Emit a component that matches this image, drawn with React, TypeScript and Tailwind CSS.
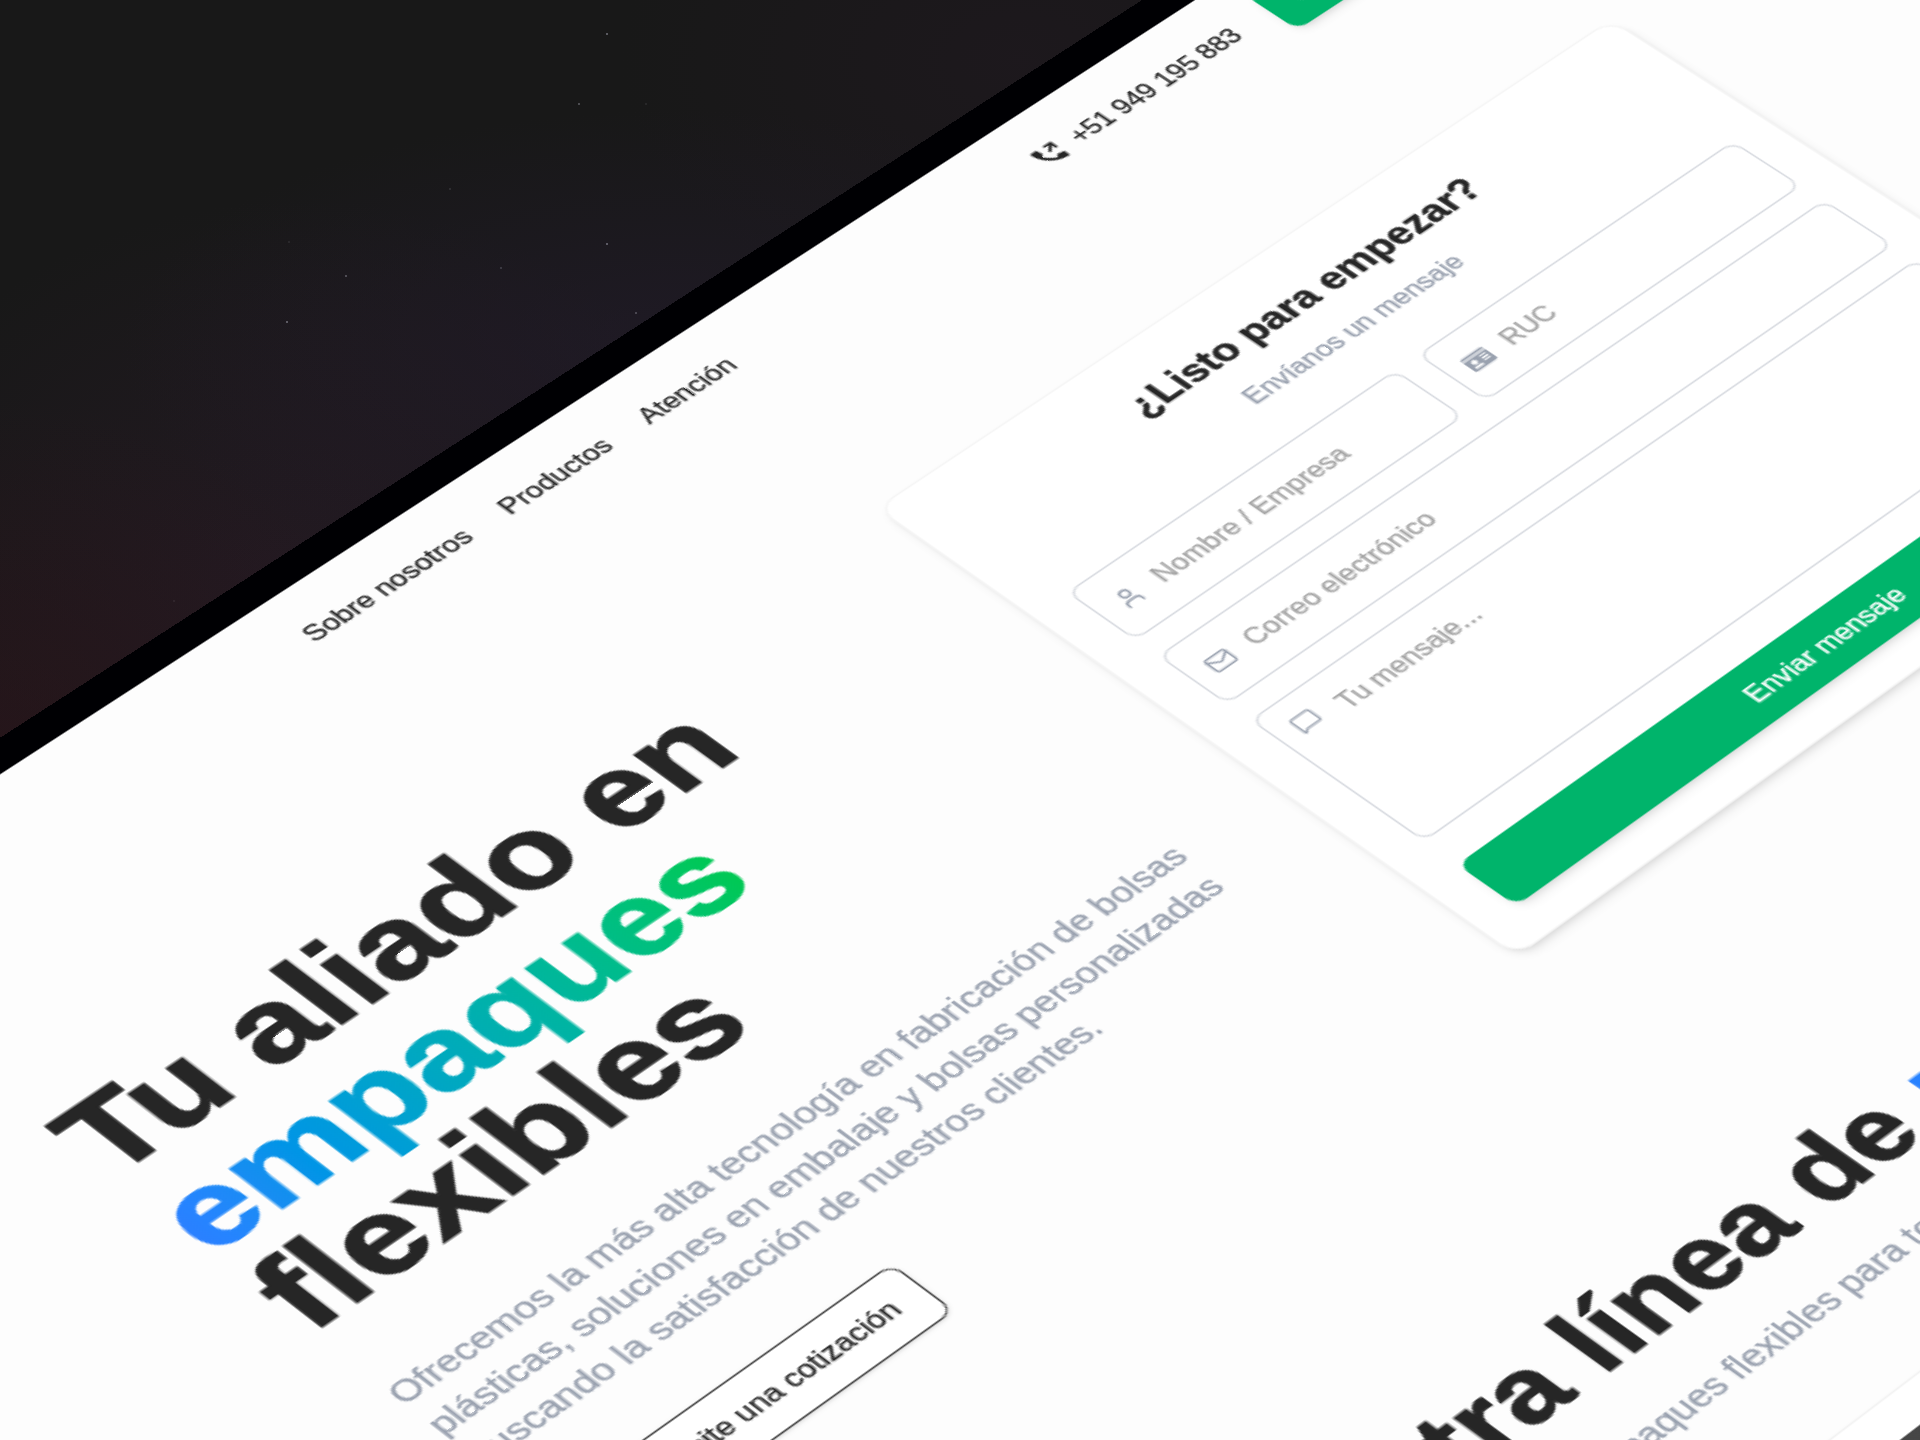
import React from "react";
import { Mail, MessageSquare, User } from "lucide-react";
import { FaIdCard } from "react-icons/fa";

const STARS = [
  { x: 606, y: 33, o: 0.5 },
  { x: 578, y: 103, o: 0.4 },
  { x: 606, y: 243, o: 0.5 },
  { x: 345, y: 275, o: 0.4 },
  { x: 286, y: 321, o: 0.5 },
  { x: 449, y: 188, o: 0.16 },
  { x: 288, y: 241, o: 0.12 },
  { x: 500, y: 267, o: 0.25 },
  { x: 635, y: 312, o: 0.35 },
  { x: 645, y: 103, o: 0.12 },
  { x: 173, y: 600, o: 0.1 },
];

function PhoneOutgoing() {
  return (
    <svg viewBox="0 0 24 24" className="size-[20px]" fill="currentColor">
      <path d="M20.01 15.38c-1.23 0-2.42-.2-3.53-.56a.977.977 0 0 0-1.01.24l-1.57 1.97c-2.83-1.35-5.48-3.9-6.89-6.83l1.95-1.66c.27-.28.35-.67.24-1.02-.37-1.11-.56-2.3-.56-3.53 0-.54-.45-.99-.99-.99H4.19C3.65 3 3 3.24 3 3.99 3 13.28 10.73 21 20.01 21c.71 0 .99-.63.99-1.18v-3.45c0-.54-.45-.99-.99-.99z" />
      <path d="M14 3.9H20v6M19.8 4.1l-5.9 5.9" fill="none" stroke="currentColor" strokeWidth="2" />
    </svg>
  );
}

function Field({ icon, label, tall }: { icon: React.ReactNode; label: string; tall?: boolean }) {
  return (
    <div
      className={
        tall
          ? "flex h-[123px] items-start gap-[13.5px] rounded-lg border border-gray-300/90 bg-white px-[11px] pt-[12px]"
          : "flex h-[50px] flex-1 items-center gap-3 rounded-lg border border-gray-300/90 bg-white px-[11px]"
      }
    >
      <span className="text-gray-400">{icon}</span>
      <span className="leading-6 text-[#a3a3a3]">{label}</span>
    </div>
  );
}

function Header() {
  return (
    <header className="mx-auto flex h-[72.2px] w-[1120px] items-center text-[#262626]">
      <nav className="ml-[317px] flex gap-6 pb-[2px] leading-6">
        <span>Sobre nosotros</span>
        <span>Productos</span>
        <span>Atención</span>
      </nav>
      <div className="ml-auto flex items-center gap-[7px] pb-[2px] leading-6">
        <PhoneOutgoing />
        <span>+51 949 195 883</span>
      </div>
      <div className="ml-6 flex h-10 w-[123px] items-center justify-center rounded-lg bg-[#00b46b] text-white shadow-md">
        Contáctanos
      </div>
    </header>
  );
}

function ContactCard() {
  return (
    <div className="h-[458px] w-[536px] rounded-xl border border-[#f5f5f5] bg-white p-6 shadow-md">
      <h2 className="text-center text-2xl leading-8 font-bold text-[#262626] [-webkit-text-stroke:0.4px_#262626]">
        ¿Listo para empezar?
      </h2>
      <p className="mt-2 text-center leading-6 text-gray-400">Envíanos un mensaje</p>
      <div className="mt-[25px] flex flex-col gap-4">
        <div className="flex gap-4">
          <Field icon={<User size={16} />} label="Nombre / Empresa" />
          <Field icon={<FaIdCard size={16} />} label="RUC" />
        </div>
        <div className="flex">
          <Field icon={<Mail size={16} />} label="Correo electrónico" />
        </div>
        <Field icon={<MessageSquare size={15} />} label="Tu mensaje..." tall />
      </div>
      <div className="mt-[23px] flex h-[41px] items-center justify-center rounded-lg bg-[#00b46b] text-white shadow-md">
        Enviar mensaje
      </div>
    </div>
  );
}

function Hero() {
  return (
    <section className="mx-auto flex w-[1120px] items-start gap-[47.5px] pt-[96.3px]">
      <div className="w-[536px] pt-[22.7px]">
        <h1 className="text-[72px] leading-[72.5px] font-bold text-[#262626] [-webkit-text-stroke:1.2px]">
          Tu aliado en
          <br />
          <span className="bg-linear-to-r from-blue-500 to-green-500 bg-clip-text text-transparent">empaques</span>
          <br />
          flexibles
        </h1>
        <p className="mt-[33.5px] text-xl leading-7 whitespace-nowrap text-gray-400">
          Ofrecemos la más alta tecnología en fabricación de bolsas
          <br />
          plásticas, soluciones en embalaje y bolsas personalizadas
          <br />
          buscando la satisfacción de nuestros clientes.
        </p>
        <div className="mt-[33px] inline-flex h-[44px] items-center gap-[9px] rounded-lg border border-[#404040] bg-white pr-[17px] pl-4 text-[#262626] shadow-sm">
          <Mail size={24} />
          Solicite una cotización
        </div>
      </div>
      <ContactCard />
    </section>
  );
}

function Products() {
  return (
    <section className="mx-auto w-[1120px] pt-[176px]">
      <h2 className="text-center text-[60px] leading-[60px] font-bold text-[#262626] [-webkit-text-stroke:1px]">
        Nuestra línea de{" "}
        <span className="bg-linear-to-r from-blue-500 to-green-500 bg-clip-text text-transparent">productos</span>
      </h2>
      <p className="mt-[17px] pl-[355px] text-xl leading-7 whitespace-nowrap text-gray-400">
        Empaques flexibles para todo tipo de productos
      </p>
      <div className="mt-[49px] grid grid-cols-3 gap-6">
        {["a", "b", "c"].map((k) => (
          <div key={k} className="rounded-xl border border-[#f2f2f2] bg-white p-[23px] shadow-md">
            <div className="h-60 bg-linear-to-r from-[#4a4a4a] to-[#3a3a3a]" />
          </div>
        ))}
      </div>
    </section>
  );
}

export default function App() {
  return (
    <div className="relative h-[1440px] w-[1920px] overflow-hidden bg-[#181818] bg-[radial-gradient(ellipse_420px_380px_at_0px_780px,rgba(50,18,26,0.5),transparent),radial-gradient(ellipse_560px_240px_at_680px_350px,rgba(38,28,50,0.5),transparent),radial-gradient(ellipse_460px_380px_at_300px_580px,rgba(44,27,42,0.55),transparent),radial-gradient(ellipse_400px_260px_at_1020px_60px,rgba(32,24,32,0.6),transparent)] font-['Liberation_Sans',sans-serif] text-base">
      {STARS.map((s) => (
        <span key={`${s.x}-${s.y}`} className="absolute size-[2px] rounded-full bg-[#c8c8d8]" style={{ left: s.x, top: s.y, opacity: s.o }} />
      ))}
      <div className="h-[1700px] w-[2000px] origin-top-left border-t-[20.6px] border-[#000003] bg-[#fdfdfd] [-webkit-text-stroke:0.25px] [transform:matrix3d(1.5126545,-0.9170165,0,0.0000816,1.2865494,0.908672,0,-0.0000814,0,0,1,0,1066.289,592.357,0,1)_translate(-1049px,-301.9px)]">
        <Header />
        <Hero />
        <Products />
      </div>
    </div>
  );
}
